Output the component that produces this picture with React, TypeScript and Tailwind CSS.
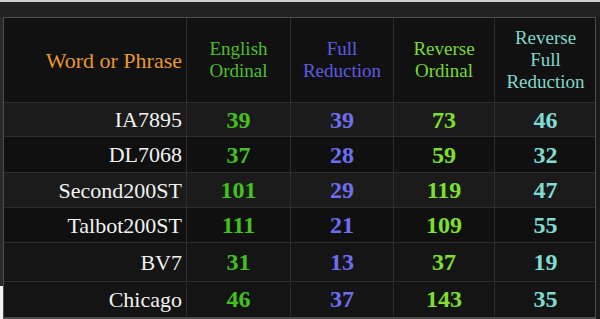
type Row = {
  label: string;
  eo: number;
  fr: number;
  ro: number;
  rfr: number;
  h: string;
  bg: string;
};

const rows: Row[] = [
  { label: "IA7895", eo: 39, fr: 39, ro: 73, rfr: 46, h: "h-[34px]", bg: "bg-[#1b1b1b]" },
  { label: "DL7068", eo: 37, fr: 28, ro: 59, rfr: 32, h: "h-[36px]", bg: "bg-[#101010]" },
  { label: "Second200ST", eo: 101, fr: 29, ro: 119, rfr: 47, h: "h-[35px]", bg: "bg-[#1b1b1b]" },
  { label: "Talbot200ST", eo: 111, fr: 21, ro: 109, rfr: 55, h: "h-[35px]", bg: "bg-[#101010]" },
  { label: "BV7", eo: 31, fr: 13, ro: 37, rfr: 19, h: "h-[39px]", bg: "bg-[#151515]" },
  { label: "Chicago", eo: 46, fr: 37, ro: 143, rfr: 35, h: "h-[34px]", bg: "bg-[#141414]" },
];

const cols = "grid grid-cols-[183px_104px_103px_101px_101px]";
const cell = "flex items-center justify-center border-r border-[#2e2e2e]";
const num = "text-[24px] font-bold leading-none";

export default function App() {
  return (
    <div className="w-[600px] h-[319px] overflow-hidden bg-[#1c1c1c] flex flex-col [font-family:'Liberation_Serif','DejaVu_Serif',serif]">
      <div className="h-[2px] bg-[#d2d2d2]" />
      <div className="h-[15px] bg-[#222222]" />
      <div className="flex flex-1">
        <div className="w-[3px] flex flex-col">
          <div className="flex-1 bg-[#2a2a2a]" />
          <div className="h-[33px] bg-[#f2f2f2]" />
        </div>
        <div className="w-[593px] border border-b-2 border-[#4d4d4d] bg-[#111111] flex flex-col">
          <div className={`${cols} h-[85px] border-b border-[#2e2e2e] bg-[#111111]`}>
            <div className={`${cell} justify-end pr-[4px] text-[22px] text-[#e8982e]`}>
              Word or Phrase
            </div>
            <div className={`${cell} text-center text-[19px] leading-[22px] text-[#4cbf2a]`}>
              English
              <br />
              Ordinal
            </div>
            <div className={`${cell} text-center text-[19px] leading-[22px] text-[#5b5be6]`}>
              Full
              <br />
              Reduction
            </div>
            <div className={`${cell} text-center text-[19px] leading-[22px] text-[#79d934]`}>
              Reverse
              <br />
              Ordinal
            </div>
            <div className={`${cell} border-r-0 text-center text-[19px] leading-[22px] text-[#80d8cc]`}>
              Reverse
              <br />
              Full
              <br />
              Reduction
            </div>
          </div>
          {rows.map((r) => (
            <div
              key={r.label}
              className={`${cols} ${r.h} ${r.bg} border-b border-[#2e2e2e] last:border-b-0`}
            >
              <div className={`${cell} justify-end pr-[4px] text-[22px] text-[#f2f2f2]`}>
                {r.label}
              </div>
              <div className={`${cell} ${num} text-[#43c11e]`}>{r.eo}</div>
              <div className={`${cell} ${num} text-[#6e6ef2]`}>{r.fr}</div>
              <div className={`${cell} ${num} text-[#7ee02c]`}>{r.ro}</div>
              <div className={`${cell} border-r-0 ${num} text-[#7edcd3]`}>{r.rfr}</div>
            </div>
          ))}
        </div>
        <div className="flex-1 bg-[#1a1a1a]" />
      </div>
    </div>
  );
}
